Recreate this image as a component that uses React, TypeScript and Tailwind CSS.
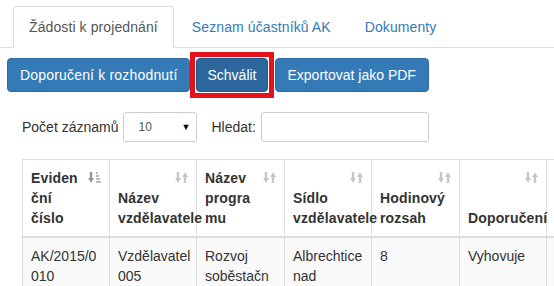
import React from "react";

function SortIcon() {
  return (
    <svg width="13" height="11" viewBox="0 0 13 11" className="block">
      <g fill="#c6c6c6">
        <rect x="1.8" y="0" width="2.4" height="7" />
        <polygon points="0,6 6,6 3,10.8" />
        <rect x="8.8" y="4" width="2.4" height="7" />
        <polygon points="7,5 13,5 10,0.2" />
      </g>
    </svg>
  );
}

function SortAscIcon() {
  return (
    <svg width="13" height="11" viewBox="0 0 13 11" className="block">
      <g fill="#959595">
        <rect x="1.8" y="0" width="2.4" height="7" />
        <polygon points="0,6 6,6 3,10.8" />
      </g>
      <g fill="#b5b5b5">
        <rect x="8" y="0" width="2" height="1.8" />
        <rect x="8" y="3" width="3" height="1.8" />
        <rect x="8" y="6" width="4" height="1.8" />
        <rect x="8" y="9" width="5" height="1.8" />
      </g>
    </svg>
  );
}

type Head = { lines: string[]; asc?: boolean };

const heads: Head[] = [
  { lines: ["Eviden", "ční", "číslo"], asc: true },
  { lines: ["Název", "vzdělavatele"] },
  { lines: ["Název", "progra", "mu"] },
  { lines: ["Sídlo", "vzdělavatele"] },
  { lines: ["Hodinový", "rozsah"] },
  { lines: ["Doporučení"] },
  { lines: [""] },
];

const row: string[][] = [
  ["AK/2015/0", "010"],
  ["Vzdělavatel", "005"],
  ["Rozvoj", "soběstačn"],
  ["Albrechtice", "nad"],
  ["8"],
  ["Vyhovuje"],
  [""],
];

export default function App() {
  return (
    <div className="w-[554px] h-[286px] overflow-hidden bg-white text-[14px] leading-[20px] text-[#333] font-['Liberation_Sans',Arial,Helvetica,sans-serif]">
      {/* Tabs */}
      <div className="flex pt-[6px] pl-[13px] border-b border-[#ddd] tracking-[0.1px]">
        <div className="-mb-px px-[15px] py-[10px] border border-[#ddd] border-b-white rounded-t-[4px] bg-white text-[#555] whitespace-nowrap">
          Žádosti k projednání
        </div>
        <div className="ml-[2px] -mb-px px-[15px] py-[10px] border border-transparent text-[#337ab7] whitespace-nowrap">
          Seznam účastníků AK
        </div>
        <div className="ml-[2px] -mb-px px-[15px] py-[10px] border border-transparent text-[#337ab7] whitespace-nowrap">
          Dokumenty
        </div>
      </div>

      {/* Buttons */}
      <div className="flex mt-[10px] ml-[7px]">
        <button className="h-[34px] px-[12px] border border-[#2e6da4] bg-[#337ab7] text-white rounded-[4px] whitespace-nowrap tracking-[0.18px]">
          Doporučení k rozhodnutí
        </button>
        <div className="relative ml-[6px]">
          <button className="h-[34px] px-[10px] border border-[#245a88] bg-[#2c689d] text-white rounded-[4px] whitespace-nowrap">
            Schválit
          </button>
          <div className="absolute -left-[6px] -right-[6px] -top-[6px] -bottom-[6px] border-[5px] border-[#e3121b] pointer-events-none" />
        </div>
        <button className="ml-[7px] h-[34px] px-[12px] border border-[#2e6da4] bg-[#337ab7] text-white rounded-[4px] whitespace-nowrap">
          Exportovat jako PDF
        </button>
      </div>

      {/* Filters */}
      <div className="flex items-center mt-[20px] ml-[22px] h-[30px]">
        <span>Počet záznamů</span>
        <div className="ml-[4px] w-[74px] h-[30px] border border-[#ccc] rounded-[3px] flex items-center justify-between pl-[15px] pr-[5px] text-[12px] text-[#555]">
          <span>10</span>
          <span className="text-[9px] text-black">▼</span>
        </div>
        <span className="ml-[15px]">Hledat:</span>
        <div className="ml-[5px] w-[168px] h-[30px] border border-[#ccc] rounded-[3px] bg-white" />
      </div>

      {/* Table */}
      <div className="mt-[17px] ml-[22px] w-[700px] grid grid-cols-[87px_87px_88px_87px_88px_87px_88px] border-l border-t border-[#ddd]">
        {heads.map((h, i) => (
          <div
            key={"h" + i}
            className="relative h-[78px] border-r border-b-2 border-[#ddd] px-[8px] py-[8px] flex flex-col justify-end font-bold whitespace-nowrap tracking-[0.15px]"
          >
            {h.lines.map((l, j) => (
              <div key={j} className="h-[20px]">
                {l}
              </div>
            ))}
            {i < 6 && (
              <div className="absolute top-[12px] right-[8px]">
                {h.asc ? <SortAscIcon /> : <SortIcon />}
              </div>
            )}
          </div>
        ))}
        {row.map((c, i) => (
          <div
            key={"r" + i}
            className="h-[60px] border-r border-b border-[#ddd] bg-[#f9f9f9] px-[8px] py-[8px] whitespace-nowrap"
          >
            {c.map((l, j) => (
              <div key={j} className="h-[20px]">
                {l}
              </div>
            ))}
          </div>
        ))}
      </div>
    </div>
  );
}
